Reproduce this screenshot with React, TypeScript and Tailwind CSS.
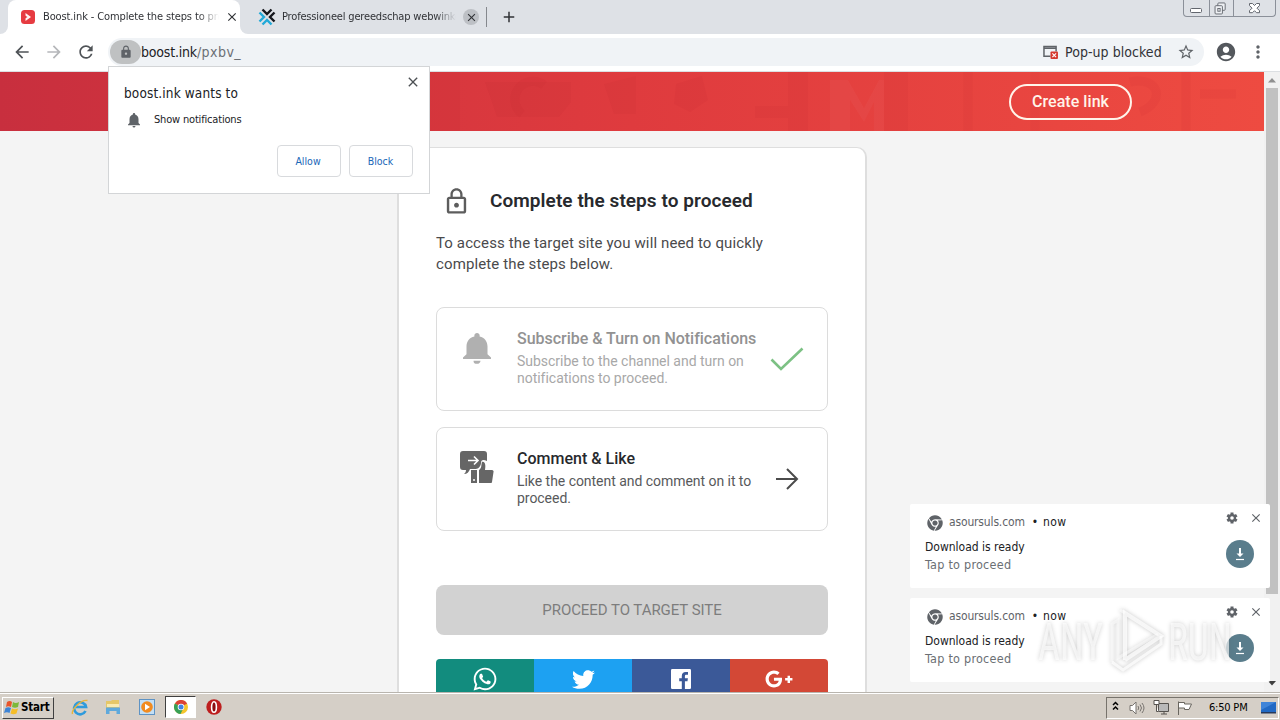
import React from "react";
import {
  MdArrowBack, MdArrowForward, MdRefresh, MdLock, MdLockOutline, MdNotifications,
  MdStarBorder, MdAccountCircle, MdMoreVert, MdClose, MdAdd,
} from "react-icons/md";
import { FaWhatsapp, FaTwitter, FaGooglePlusG, FaChrome } from "react-icons/fa";

const ui = "font-['DejaVu_Sans_Condensed','DejaVu_Sans',sans-serif] [font-stretch:condensed]";

function TabStrip() {
  return (
    <div className="flex h-[34px] items-start bg-[#dee1e6]">
      <div className="h-[34px] w-2 bg-white"><div className="h-full w-full rounded-br-lg bg-[#dee1e6]" /></div>
      <div className="flex h-[34px] w-[232px] items-center rounded-t-lg bg-white pl-[13px]">
        <svg className="h-[14px] w-[14px] shrink-0" viewBox="0 0 14 14">
          <rect width="14" height="14" rx="3.500" fill="#e63b41" />
          <path d="M4.500 3 10 7 4.500 11Z" fill="#fff" opacity=".95" />
          <path d="M4 5.500 6.500 7 4 8.500Z" fill="#e63b41" />
        </svg>
        <div className="ml-2 w-[176px] overflow-hidden whitespace-nowrap text-[11px] leading-4 tracking-[-0.12px] text-[#303236] [mask-image:linear-gradient(to_right,black_88%,transparent)]">
          Boost.ink - Complete the steps to proceed
        </div>
        <MdClose className="ml-[6px] h-[14px] w-[14px] shrink-0 text-[#303236]" />
      </div>
      <div className="h-[34px] w-2 bg-white"><div className="h-full w-full rounded-bl-lg bg-[#dee1e6]" /></div>
      <div className="flex h-[34px] items-center pl-[10px]">
        <svg className="h-[18px] w-[18px] shrink-0" viewBox="0 0 18 18" fill="none" strokeWidth="2.400">
          <path d="M4.500 1.500 9 6l4.500-4.500M16.500 4.500 12 9l4.500 4.500" stroke="#15171c" />
          <path d="M1.500 4.500 6 9l-4.500 4.500M4.500 16.500 9 12l4.500 4.500" stroke="#22a9d8" />
        </svg>
        <div className="ml-[6px] w-[174px] overflow-hidden whitespace-nowrap text-[11px] leading-4 tracking-[-0.17px] text-[#303236] [mask-image:linear-gradient(to_right,black_88%,transparent)]">
          Professioneel gereedschap webwinkel
        </div>
        <div className="ml-[7px] flex h-4 w-4 items-center justify-center rounded-full bg-[#bdc0c5]">
          <MdClose className="h-[13px] w-[13px] text-[#303236]" />
        </div>
        <div className="ml-[7px] h-5 w-px bg-[#85888d]" />
        <MdAdd className="ml-[13px] h-[18px] w-[18px] text-[#303236]" />
      </div>
      <div className="ml-auto mr-1 flex h-[17px] w-[93px] rounded-b-[4px] border border-t-0 border-[#8b9099] text-[#62666e]">
        <svg className="h-4 w-[25px]" viewBox="0 0 25 16" fill="#fff" stroke="currentColor">
          <rect x="6.500" y="8.500" width="11" height="4" rx="1" />
        </svg>
        <svg className="h-4 w-[25px] border-x border-[#8b9099]" viewBox="0 0 25 16" fill="#eef0f3" stroke="currentColor">
          <rect x="8.500" y="2.500" width="8" height="8" rx="1" />
          <rect x="5.500" y="5.500" width="8" height="9" rx="1" />
          <rect x="8.500" y="8.500" width="2.500" height="3" />
        </svg>
        <svg className="h-4 w-[41px]" viewBox="0 0 41 16" fill="#fff" stroke="currentColor">
          <path d="M15.500 3.500h3l2 2 2-2h3v2l-2.500 2.700 2.500 2.500v2h-3l-2-2-2 2h-3v-2l2.500-2.500-2.500-2.700Z" />
        </svg>
      </div>
    </div>
  );
}

function Toolbar() {
  return (
    <div className="flex h-[38px] items-center border-b border-[#dcdfe2] bg-white pb-px text-[#5f6368]">
      <MdArrowBack className="ml-3 h-5 w-5 text-[#4f5357]" />
      <MdArrowForward className="ml-3 h-5 w-5 text-[#b5b7ba]" />
      <MdRefresh className="ml-3 h-5 w-5 text-[#4f5357]" />
      <div className="ml-3 flex h-7 w-[1096px] items-center rounded-full bg-[#f0f3f6]">
        <div className="ml-[2px] flex h-6 w-[31px] items-center justify-center rounded-full bg-[#bfc1c2]">
          <MdLock className="h-[14px] w-[14px]" />
        </div>
        <div className="text-[14px] leading-6 tracking-[-0.2px] text-[#202124]">
          boost.ink<span className="tracking-[0.45px] text-[#6b6f74]">/pxbv_</span>
        </div>
        <div className="ml-auto flex items-center">
          <svg className="h-[14px] w-[15px]" viewBox="0 0 16 15">
            <path d="M1 1.500h13v2H1zM1 3v9h7M14 4v3" fill="none" stroke="#5f6368" strokeWidth="1.600" />
            <rect x="8" y="7" width="8" height="8" rx="1" fill="#d5392f" />
            <path d="m10 9 4 4m0-4-4 4" stroke="#fff" strokeWidth="1.200" />
          </svg>
          <div className="ml-[7px] w-[98px] whitespace-nowrap text-[14px] leading-6 tracking-[0.05px] text-[#303236]">Pop-up blocked</div>
          <MdStarBorder className="ml-[14px] mr-[9px] h-[18px] w-[18px]" />
        </div>
      </div>
      <MdAccountCircle className="ml-[11px] h-[22px] w-[22px] text-[#54585d]" />
      <MdMoreVert className="ml-[11px] h-[20px] w-[20px]" />
    </div>
  );
}

function Banner() {
  return (
    <div className="relative h-[59px] w-full bg-linear-to-r from-[#c82f3e] via-[#df3b3e] to-[#ee4b41]">
      <svg className="absolute inset-0 h-full w-full" viewBox="0 0 1264 59" preserveAspectRatio="none">
        <g fill="#a3142a" opacity=".05">
          <path d="M430 0h30v59h-30zM485 10h86v20l-12 15h-62zM604 12l32-8v38h-22zM676 12l26-8 6 24-18 12-16-8zM755 34h36v12h-36z" />
          <path d="M884 0h24v59h-24zM788 0h20v59h-20z" />
        </g>
        <path d="M830 59V8h18l16 28 15-28h5v51h-10V30l-10 20-14-22v31z" fill="#fff" opacity=".03" />
        <g fill="none" stroke="#b3202c" opacity=".07" strokeWidth="9">
          <path d="M522 42a18 18 0 1 1 22-29M968 0v59M1035 0v59M1130 10c30-6 36 20 10 30M1186 0v59M1200 22h36" />
        </g>
      </svg>
      <div className="relative flex justify-end pr-[132px] pt-3">
        <button className="flex h-9 w-[123px] items-center justify-center rounded-full border-2 border-[#fff4ea] pb-px text-[16px] font-medium tracking-[0.05px] text-[#fff4ea]">
          Create link
        </button>
      </div>
    </div>
  );
}

function Step({ icon, title, lines, end, done }: { icon: React.ReactNode; title: string; lines: string[]; end: React.ReactNode; done?: boolean }) {
  return (
    <div className="flex h-[104px] w-[392px] rounded-lg border border-[#dcdcdc]">
      <div className="flex w-[80px] justify-center pt-[23px]">{icon}</div>
      <div className="w-[252px] whitespace-nowrap pt-[21px]">
        <div className={done ? "text-[16px] font-medium leading-5 tracking-[-0.02px] text-[#929292]" : "text-[16px] font-medium leading-5 tracking-[0.02px] text-[#27292d]"}>{title}</div>
        <div className={done ? "mt-1 text-[14px] leading-[17px] tracking-[-0.02px] text-[#a8a8a8]" : "mt-1 text-[14px] leading-[17px] tracking-[-0.04px] text-[#58595b]"}>
          {lines.map((l) => <div key={l}>{l}</div>)}
        </div>
      </div>
      <div className="flex w-[36px] items-center justify-center">{end}</div>
    </div>
  );
}

function Card() {
  return (
    <div className="ml-[397px] mt-4 flex h-[545px] w-[470px] flex-col rounded-t-[10px] border-x-2 border-t border-[#dedede] bg-white pl-[37px] pt-[38px]">
      <div className="flex h-[30px] items-center">
        <MdLockOutline className="ml-[6px] h-[29px] w-[29px] text-[#5d5d5d]" />
        <h1 className="ml-[19px] text-[19px] font-semibold leading-[30px] tracking-[0.06px] text-[#27292d]">Complete the steps to proceed</h1>
      </div>
      <p className="mt-[17px] w-[392px] whitespace-nowrap text-[15px] leading-[21px] tracking-[0.12px] text-[#4a4a4c]">
        To access the target site you will need to quickly<br />complete the steps below.
      </p>
      <div className="mt-[32px] flex flex-col gap-4">
        <Step
          done
          icon={<MdNotifications className="-mt-[2px] h-[38px] w-[42px] text-[#b0b0b0]" preserveAspectRatio="none" />}
          title="Subscribe & Turn on Notifications"
          lines={["Subscribe to the channel and turn on", "notifications to proceed."]}
          end={<svg className="h-6 w-[34px]" viewBox="0 0 34 24" fill="none" stroke="#7cc184" strokeWidth="2.600"><path d="m1.500 12.500 9.500 9.500L32.500 1.500" /></svg>}
        />
        <Step
          icon={
            <svg className="h-[34px] w-[34px]" viewBox="0 0 34 34" fill="#666">
              <path d="M3 0h21a3 3 0 0 1 3 3v7c-4-2-6-1-6 2 0 3-3 6-5 6H10c-1 3-3 5-6 5 1-1 2-2 2-4H3a3 3 0 0 1-3-3V3a3 3 0 0 1 3-3Z" />
              <path d="M8 9.500h10m-4-4 4 4-4 4" fill="none" stroke="#fff" strokeWidth="1.600" />
              <path d="M11 19h6v13h-6zM19 19c3-2 2-5 3-8 3-1 4 3 3 8h7c1 0 2 1 1.500 2L32 31c0 1-1 1-2 1H19z" />
              <circle cx="14" cy="29" r="1" fill="#fff" />
            </svg>
          }
          title="Comment & Like"
          lines={["Like the content and comment on it to", "proceed."]}
          end={<svg className="h-[22px] w-[24px]" viewBox="0 0 24 22" fill="none" stroke="#4b4b4b" strokeWidth="2"><path d="M1 11h21M12 1l10 10-10 10" /></svg>}
        />
      </div>
      <div className="mt-[54px] flex h-[50px] w-[392px] shrink-0 items-center justify-center rounded-lg bg-[#d2d2d2] text-[15px] tracking-[-0.05px] text-[#7d7d7d]">
        PROCEED TO TARGET SITE
      </div>
      <div className="mt-6 flex h-[40px] w-[392px] shrink-0 overflow-hidden rounded-t text-white">
        <div className="flex w-[98px] items-center justify-center bg-[#128c7e]"><FaWhatsapp className="h-[26px] w-[26px]" /></div>
        <div className="flex w-[98px] items-center justify-center bg-[#1da1f2]"><FaTwitter className="h-[23px] w-[23px]" /></div>
        <div className="flex w-[98px] items-center justify-center bg-[#3b5998]">
          <svg className="h-5 w-5" viewBox="0 0 20 20">
            <rect width="20" height="20" rx="1.200" fill="#fff" />
            <path d="M10.800 20v-7.700H8.200v-3h2.600V7c0-2.600 1.600-4 3.900-4 1.100 0 2.100.1 2.300.1v2.700h-1.600c-1.300 0-1.500.6-1.500 1.500v2h3l-.4 3h-2.600V20Z" fill="#3b5998" />
          </svg>
        </div>
        <div className="flex w-[98px] items-center justify-center bg-[#d34836]"><FaGooglePlusG className="h-[28px] w-[28px]" /></div>
      </div>
    </div>
  );
}

function Scrollbar() {
  return (
    <div className="flex w-4 flex-col items-center bg-[#f1f1f1]">
      <svg className="h-4 w-4 shrink-0" viewBox="0 0 16 16"><path d="m4 10.500 4-4.500 4 4.500Z" fill="#909090" /></svg>
      <div className="h-[506px] w-3 bg-[#c1c1c1]" />
      <svg className="mt-auto h-4 w-4 shrink-0" viewBox="0 0 16 16"><path d="m4 5 4 4.500L12 5Z" fill="#404040" /></svg>
    </div>
  );
}

function PermissionPrompt() {
  return (
    <div className={`${ui} absolute left-[108px] top-[66px] flex h-[128px] w-[322px] flex-col border border-[#d3d5d7] bg-white`}>
      <div className="flex items-start pl-[15px] pr-2 pt-[7px]">
        <div className="pt-[9px] text-[13.500px] leading-5 tracking-[0.13px] text-[#202124]">boost.ink wants to</div>
        <MdClose className="ml-auto h-4 w-4 text-[#4d5054]" />
      </div>
      <div className="mt-[7px] flex h-5 items-center pl-4">
        <MdNotifications className="h-[18px] w-[18px] text-[#5f6368]" />
        <div className="ml-[11px] text-[11px] tracking-[-0.18px] text-[#202124]">Show notifications</div>
      </div>
      <div className="mr-4 mt-[15px] flex justify-end gap-2 text-[10.500px] text-[#1a67b8]">
        <div className="flex h-8 w-16 items-center justify-center rounded border border-[#d8dadd] pr-[2px] pt-px">Allow</div>
        <div className="flex h-8 w-16 items-center justify-center rounded border border-[#d8dadd] pr-px pt-px">Block</div>
      </div>
    </div>
  );
}

function Gear() {
  return (
    <svg className="h-[12px] w-[12px]" viewBox="0 0 12 12">
      <g stroke="#5f6368" strokeWidth="3">
        <path d="M6 .5v11" />
        <path d="M6 .5v11" transform="rotate(60 6 6)" />
        <path d="M6 .5v11" transform="rotate(120 6 6)" />
      </g>
      <circle cx="6" cy="6" r="4.100" fill="#5f6368" />
      <circle cx="6" cy="6" r="1.800" fill="#fff" />
    </svg>
  );
}

function Toast() {
  return (
    <div className="flex h-[84px] w-[360px] justify-between rounded-[2px] bg-white pl-[15px]">
      <div className="pt-[9px]">
        <div className="flex h-[18px] items-center text-[12px] tracking-[-0.15px] text-[#5f6368]">
          <FaChrome className="ml-[2px] mt-[2px] h-4 w-4" />
          <span className="ml-[6px]">asoursuls.com</span>
          <span className="ml-[7px] text-[#202124]">•</span>
          <span className="ml-[5px] tracking-[0.45px] text-[#202124]">now</span>
        </div>
        <div className="mt-2 text-[12px] leading-[17px] tracking-[-0.01px] text-[#202124]">Download is ready</div>
        <div className="text-[12.500px] leading-[17px] tracking-[0.25px] text-[#6b6f74]">Tap to proceed</div>
      </div>
      <div className="flex w-[52px] flex-col pt-[7px] text-[#5f6368]">
        <div className="flex h-[14px] items-center gap-[11px] pl-2">
          <Gear />
          <MdClose className="h-[14px] w-[14px]" />
        </div>
        <svg className="ml-2 mt-[15px] h-7 w-7" viewBox="0 0 28 28">
          <circle cx="14" cy="14" r="14" fill="#5a7d8c" />
          <path d="M14 8v7" stroke="#fff" strokeWidth="2" />
          <path d="M10.500 13.500h7L14 17Z" fill="#fff" />
          <path d="M10 19.500h8" stroke="#fff" strokeWidth="1.200" />
        </svg>
      </div>
    </div>
  );
}

function Watermark() {
  return (
    <svg className="absolute left-[1032px] top-[602px] h-[76px] w-[208px] drop-shadow-[0_0_2px_rgba(90,90,90,0.45)]" viewBox="0 0 208 76">
      <g fill="#fff" fillOpacity=".65" fontFamily="'Liberation Sans Narrow','Roboto',sans-serif" fontSize="52">
        <text x="6" y="58" textLength="65" lengthAdjust="spacingAndGlyphs">ANY</text>
        <text x="136" y="58" textLength="64" lengthAdjust="spacingAndGlyphs">RUN</text>
      </g>
      <g fill="none" stroke="#fff" strokeOpacity=".75" strokeWidth="4">
        <path d="M93 58V11l36 23-36 24" />
        <path d="M93 11 88 8M80 60V22l6-4v38l40-24" strokeWidth="3" strokeOpacity=".5" />
        <path d="M80 60l11 8 38-26v-8" strokeWidth="3" />
      </g>
    </svg>
  );
}

function Taskbar() {
  return (
    <div className="flex h-7 items-center border-t border-[#b9b5ae] bg-[#d5cfc7] shadow-[inset_0_1px_0_#fff]">
      <div className="ml-[2px] mt-[2px] flex h-[22px] w-[52px] items-center border border-b-[#404040] border-l-white border-r-[#404040] border-t-white pl-px">
        <svg className="h-[15px] w-4 shrink-0" viewBox="0 0 16 15">
          <path d="M3 2c2-1.500 4-1 5 0L7 7C5 6 3.500 6 2 7Z" fill="#e9552b" />
          <path d="M9 2c2 1.500 4 1 6 0l-1 5c-2 1-4 1-6 0Z" fill="#7db83b" />
          <path d="M1.500 8C3.500 7 5 7 7 8l-1.500 5C4 12 2 12 0 13Z" fill="#3d84d6" />
          <path d="M8 8.500c2 1 4 1 6 0l-1.500 5c-2 1-4 1-6 0Z" fill="#f5bd27" />
        </svg>
        <span className="ml-px text-[11.500px] font-bold tracking-[-0.2px] text-black">Start</span>
      </div>
      <svg className="ml-[17px] h-[18px] w-[18px]" viewBox="0 0 18 18" fill="none">
        <path d="M14.500 12a6 6 0 1 1 .5-4H5" stroke="#2f9bdc" strokeWidth="2.700" transform="translate(0 1)" />
        <path d="M1.500 16C0 12 10 1 16.500 2.500" stroke="#e8b53a" strokeWidth="1.400" />
      </svg>
      <svg className="ml-[16px] h-4 w-4" viewBox="0 0 16 16">
        <path d="M1 2h5l1-1h7v11H1Z" fill="#e5c768" />
        <path d="M2 5h12v3H2Z" fill="#f9eab0" />
        <path d="M1 15V8.500h14V15h-3.500v-3h-7v3Z" fill="#5fa9dc" />
      </svg>
      <svg className="ml-[18px] h-4 w-4" viewBox="0 0 16 16">
        <rect x=".5" y=".5" width="15" height="15" fill="#c3dff5" stroke="#5e93c4" />
        <circle cx="8" cy="8" r="5.800" fill="#f28b1f" />
        <path d="M6 4.800 11 8l-5 3.200Z" fill="#fff" />
      </svg>
      <div className="ml-[10px] mt-[1px] flex h-[22px] w-[31px] items-center justify-center border border-b-white border-l-[#404040] border-r-white border-t-[#404040] bg-white">
        <svg className="h-[14px] w-[14px]" viewBox="0 0 14 14">
          <circle cx="7" cy="7" r="7" fill="#f5c52c" />
          <path d="M7 7 .9 3.500A7 7 0 0 1 13.100 3.500Z" fill="#dc4236" />
          <path d="M7 7 .9 3.500A7 7 0 0 0 6.500 14L9.500 8Z" fill="#38a056" />
          <circle cx="7" cy="7" r="3.300" fill="#fff" />
          <circle cx="7" cy="7" r="2.500" fill="#4283e3" />
        </svg>
      </div>
      <svg className="ml-[10px] h-4 w-4" viewBox="0 0 16 16">
        <circle cx="8" cy="8" r="7.700" fill="#bd1e1e" />
        <ellipse cx="8" cy="8" rx="2.400" ry="5.300" fill="#8b0e10" stroke="#fff" strokeWidth="1.600" />
      </svg>
      <div className="ml-auto mr-[1px] mt-[2px] flex h-[22px] w-[173px] items-center border border-b-white border-l-[#77736c] border-r-white border-t-[#77736c]">
        <svg className="mb-1 ml-[5px] h-[10px] w-[7px]" viewBox="0 0 7 10" fill="none" stroke="#000" strokeWidth="1.500"><path d="m1 4 2.500-2.500L6 4M1 8.500 3.500 6 6 8.500" /></svg>
        <svg className="ml-[10px] h-[14px] w-4" viewBox="0 0 16 14" fill="none" stroke="#77736f">
          <path d="M1 4.500h2.500L7 1v12L3.500 9.500H1Z" fill="#fff" />
          <path d="M9 5q1.500 2 0 4M11 3.500q3 3.500 0 7M13 2q4 5 0 10" />
        </svg>
        <svg className="ml-[8px] h-[15px] w-4" viewBox="0 0 16 15" fill="none" stroke="#56534f">
          <path d="M5.500 3.500h10v8h-10zM8 14h6M11 11v3" fill="#b9b9b9" />
          <path d="M1 .500h5v4H1zM3.500 4.500v7h2" fill="#fff" />
        </svg>
        <svg className="ml-[8px] h-[14px] w-4" viewBox="0 0 16 14" fill="#fff" stroke="#69665f">
          <path d="M1.500 14V.500M1.500 1.500h6v1.500h7L12 8.500H7.500V7h-6" />
        </svg>
        <span className="ml-[16px] whitespace-nowrap pt-px text-[11px] tracking-[-0.2px] text-black">6:50 PM</span>
        <svg className="ml-auto mr-[2px] h-[12px] w-[15px]" viewBox="0 0 15 12">
          <path d="M0 0h15v10H0Z" fill="#2169c4" />
          <path d="M0 0h15L0 8Z" fill="#3f84d8" />
          <path d="M0 10h15v1.500H0Z" fill="#27395a" />
        </svg>
      </div>
    </div>
  );
}

export default function App() {
  return (
    <div className={`${ui} relative flex h-[720px] w-[1280px] flex-col overflow-hidden`}>
      <TabStrip />
      <Toolbar />
      <div className="flex h-[620px] overflow-hidden">
        <div className="w-[1264px] overflow-hidden bg-[#f4f4f4] font-[Roboto,sans-serif] [font-stretch:normal]">
          <Banner />
          <Card />
        </div>
        <Scrollbar />
      </div>
      <Taskbar />
      <PermissionPrompt />
      <div className="absolute left-[910px] top-[504px] flex flex-col gap-[10px]">
        <Toast />
        <Toast />
      </div>
      <Watermark />
    </div>
  );
}
